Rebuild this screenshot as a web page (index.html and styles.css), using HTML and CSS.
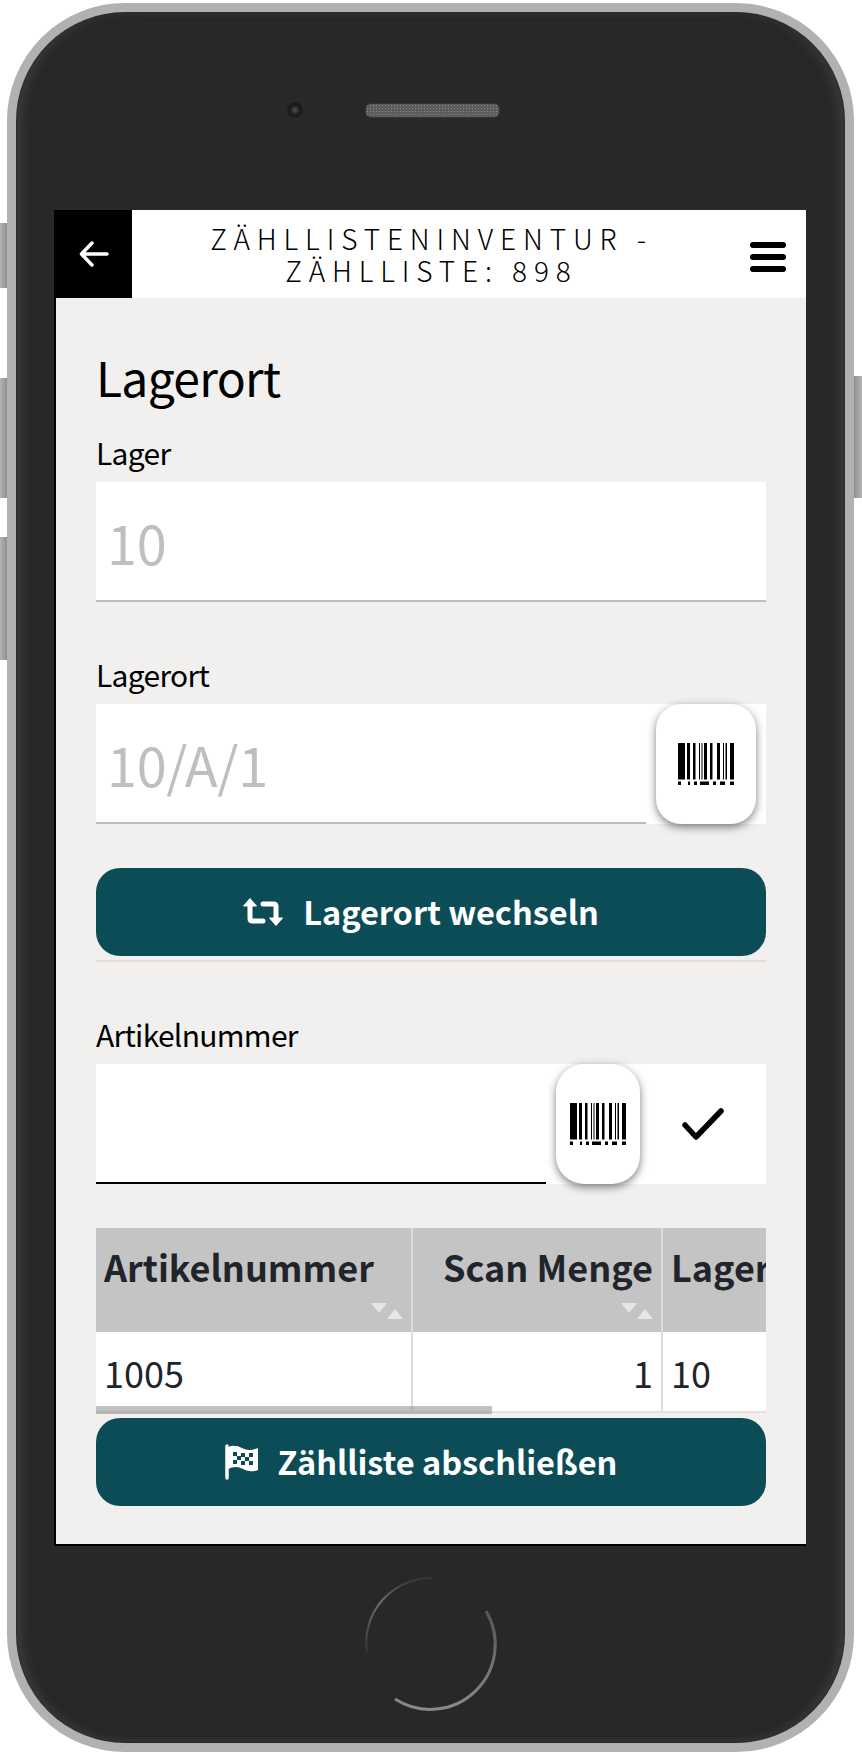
FILE: index.html
```html
<!DOCTYPE html>
<html lang="de">
<head>
    <meta charset="UTF-8">
    <meta name="viewport" content="width=device-width, initial-scale=1.0">
    <title>Zähllisteninventur</title>
    <link rel="stylesheet" href="styles.css">
</head>
<body>

    <div class="phone">
        <!-- Seitentasten -->
        <span class="side-key key-1"></span>
        <span class="side-key key-2"></span>
        <span class="side-key key-3"></span>
        <span class="side-key key-4"></span>

        <div class="bezel-top">
            <span class="camera"></span>
            <span class="speaker"></span>
        </div>

        <div class="screen">
            <div class="topbar">
                <div class="back">
                    <svg width="30" height="26" viewBox="0 0 30 26"><path d="M28 13H3M13 2 2.500 13 13 24" fill="none" stroke="#fff" stroke-width="3.500" stroke-linecap="round" stroke-linejoin="round"/></svg>
                </div>
                <div class="title">ZÄHLLISTENINVENTUR -<br>ZÄHLLISTE: 898</div>
                <div class="burger"><span></span><span></span><span></span></div>
            </div>

            <div class="content">
                <h2>Lagerort</h2>

                <label class="lbl">Lager</label>
                <div class="field"><div class="input muted">10</div></div>

                <label class="lbl lbl-2">Lagerort</label>
                <div class="field">
                    <div class="input muted">10/A/1</div>
                    <button class="scan">
                        <svg width="56" height="42" viewBox="0 0 56 42"><use href="#bars"/></svg>
                    </button>
                </div>

                <button class="action action-1">
                    <svg width="41" height="28" viewBox="0 0 41 28"><path d="M7 8V20.500Q7 23 9.500 23H20M20 6H30.500Q33 6 33 8.500V20" fill="none" stroke="#fff" stroke-width="5" stroke-linecap="round"/><path d="M7 0.500 0.500 8H13.500ZM33 27.500 26.500 20H39.500Z" fill="#fff" stroke="#fff" stroke-width="1" stroke-linejoin="round"/></svg>
                    <span>Lagerort wechseln</span>
                </button>
                <div class="line"></div>

                <label class="lbl lbl-3">Artikelnummer</label>
                <div class="field">
                    <div class="input dark"></div>
                    <button class="scan scan-small">
                        <svg width="56" height="42" viewBox="0 0 56 42"><use href="#bars"/></svg>
                    </button>
                    <div class="check">
                        <svg width="44" height="34" viewBox="0 0 44 34"><path d="M4 18 15 30 40 4" fill="none" stroke="#000" stroke-width="5.500" stroke-linecap="round" stroke-linejoin="round"/></svg>
                    </div>
                </div>

                <div class="table-wrap">
                    <table>
                        <tr>
                            <th class="col-a">Artikelnummer<i class="sort"></i></th>
                            <th class="col-b">Scan Menge<i class="sort"></i></th>
                            <th class="col-c">Lager</th>
                        </tr>
                        <tr>
                            <td class="col-a">1005</td>
                            <td class="col-b">1</td>
                            <td class="col-c">10</td>
                        </tr>
                    </table>
                    <div class="scrollbar"></div>
                </div>

                <button class="action">
                    <svg width="34" height="36" viewBox="0 0 34 36"><path d="M2 2V34" stroke="#fff" stroke-width="3.500" stroke-linecap="round"/><path d="M3 3Q10 0 17 4T33 4V26Q25 29 18 25T3 25Z" fill="#fff"/><path d="M8 8h4v4H8zM16 9h4v4h-4zM24 9h4v4h-4zM12 12h4v4h-4zM20 13h4v4h-4zM8 16h4v4H8zM16 17h4v4h-4zM24 17h4v4h-4z" fill="#0c4c57"/></svg>
                    <span>Zählliste abschließen</span>
                </button>
            </div>
        </div>

        <div class="bezel-bottom">
            <svg width="140" height="140" viewBox="0 0 140 140">
                <defs>
                    <linearGradient id="ring-a" x1="0" y1="0" x2="0" y2="1"><stop offset="0" stop-color="#333"/><stop offset="0.3" stop-color="#6e6e6e"/><stop offset="1" stop-color="#333"/></linearGradient>
                    <linearGradient id="ring-b" x1="0" y1="0" x2="0" y2="1"><stop offset="0" stop-color="#555"/><stop offset="1" stop-color="#8a8a8a"/></linearGradient>
                </defs>
                <path d="M72 5A65 65 0 0 0 6 80" fill="none" stroke="url(#ring-a)" stroke-width="2"/>
                <path d="M125 38A65 65 0 0 1 34 126" fill="none" stroke="url(#ring-b)" stroke-width="3"/>
            </svg>
        </div>
    </div>

    <!-- Barkod, iki yerde kullanılıyor -->
    <svg width="0" height="0" class="defs">
        <g id="bars" fill="#000">
            <path d="M0 0h7v36.500H0zM9 0h3v36.500H9zM15 0h2.500v36.500H15zM21 0h1v36.500h-1zM23.500 0h1v36.500h-1zM26 0h3v36.500h-3zM32 0h2.500v36.500H32zM39 0h3v36.500h-3zM45 0h1v36.500h-1zM47.500 0h1.500v36.500h-1.500zM52 0h4v36.500h-4z"/>
            <path d="M0 38.500h3V42H0zM10 38.500h2V42h-2zM16 38.500h3V42h-3zM22 38.500h9V42h-9zM35 38.500h3V42h-3zM42 38.500h5V42h-5zM52 38.500h4V42h-4z"/>
        </g>
    </svg>

</body>
</html>
```

FILE: styles.css
```css
body {
    margin: 0;
    background-color: #fff;
    font-family: "Noto Sans CJK SC", "Noto Sans", sans-serif;
}

.defs {
    position: absolute;
}

/* Telefon gövdesi */
.phone {
    position: relative;
    box-sizing: border-box;
    width: 847px;
    height: 1749px;
    margin: 3px 0 0 7px;
    border: 9px solid #b1b1b1;
    border-radius: 118px;
    background-color: #282828;
    box-shadow: inset 0 0 3px #1d1d1d, inset 8px 0 10px -2px #3c3c3c, inset -8px 0 10px -2px #3c3c3c, inset 0 -4px 8px -2px #333;
    display: flex;
    flex-direction: column;
}

.side-key {
    position: absolute;
    width: 7px;
    background: linear-gradient(to right, #b5b5b5, #8f8f8f);
}

.key-1 { left: -16px; top: 211px; height: 65px; }
.key-2 { left: -16px; top: 366px; height: 120px; }
.key-3 { left: -16px; top: 525px; height: 123px; }
.key-4 { right: -17px; top: 364px; width: 8px; height: 122px; background: linear-gradient(to right, #8f8f8f, #b5b5b5); }

.bezel-top {
    height: 198px;
    position: relative;
    flex: none;
}

.camera {
    position: absolute;
    left: 271px;
    top: 90px;
    width: 16px;
    height: 16px;
    border-radius: 50%;
    background: radial-gradient(circle, #50505a 0, #1a1a1e 45%, #232325 100%);
}

.speaker {
    position: absolute;
    left: 350px;
    top: 92px;
    width: 133px;
    height: 13px;
    border-radius: 5px;
    background-color: #5c5c5c;
    background-image: radial-gradient(circle, #8a8a8a 1px, transparent 1px);
    background-size: 3px 3px;
    box-shadow: 0 0 2px #555;
}

.screen {
    flex: none;
    height: 1336px;
    margin-left: 38px;
    margin-right: 39px;
    box-sizing: border-box;
    background-color: #f1f0ee;
    border-left: 2px solid #000;
    border-bottom: 2px solid #000;
}

.bezel-bottom {
    flex: 1;
    display: flex;
    justify-content: center;
    padding-top: 27px;
}

.topbar {
    height: 88px;
    background-color: #fff;
    display: flex;
    align-items: center;
}

.back {
    width: 76px;
    height: 88px;
    background-color: #000;
    display: flex;
    align-items: center;
    justify-content: center;
    margin-left: -2px;
    padding-left: 2px;
}

.title {
    flex: 1;
    padding-right: 19px;
    text-align: center;
    font-weight: 300;
    font-size: 28px;
    line-height: 32px;
    letter-spacing: 6.900px;
    color: #000;
}

.burger {
    width: 36px;
    margin: 6px 20px 0 0;
    display: flex;
    flex-direction: column;
    gap: 6px;
}

.burger span {
    height: 6px;
    border-radius: 3px;
    background-color: #000;
}

.content {
    padding: 0 40px;
}

h2 {
    margin: 0;
    padding-top: 46px;
    font-size: 48px;
    line-height: 64px;
    font-weight: 400;
    letter-spacing: -0.700px;
    color: #000;
}

.lbl {
    display: block;
    font-size: 30px;
    line-height: 40px;
    letter-spacing: -0.700px;
    color: #000;
    margin-top: 24px;
    height: 50px;
}

.lbl-2 {
    margin-top: 52px;
}

.lbl-3 {
    margin-top: 52px;
}

.field {
    height: 120px;
    background-color: #fff;
    display: flex;
}

.input {
    flex: 1;
    height: 120px;
    box-sizing: border-box;
    padding-left: 11px;
    font-size: 54px;
    font-weight: 400;
    letter-spacing: -0.300px;
    line-height: 120px;
    border-bottom: 2px solid #bdbdbd;
}

.muted {
    color: #bfbfbf;
}

.dark {
    border-bottom-color: #000;
}

.scan {
    flex: none;
    width: 100px;
    height: 120px;
    margin: 0 10px;
    padding: 0;
    border: none;
    border-radius: 25px;
    background-color: #fff;
    box-shadow: 0 3px 8px rgba(0, 0, 0, 0.5);
    display: flex;
    align-items: center;
    justify-content: center;
}

.scan-small {
    width: 84px;
    border-radius: 28px;
}

.check {
    flex: none;
    width: 106px;
    padding-right: 10px;
    display: flex;
    align-items: center;
    justify-content: center;
}

.action {
    display: flex;
    align-items: center;
    justify-content: center;
    gap: 19px;
    width: 100%;
    height: 88px;
    padding: 0 20px 0 0;
    border: none;
    border-radius: 24px;
    background-color: #0c4c57;
    color: #fff;
    font-family: inherit;
    font-size: 32.500px;
    font-weight: 700;
}

.action span {
    margin-bottom: 4px;
}

.action-1 {
    margin-top: 44px;
}

.line {
    height: 2px;
    margin-top: 4px;
    background-color: #e3ded8;
}

.table-wrap {
    position: relative;
    height: 186px;
    margin-top: 44px;
    margin-bottom: 4px;
    overflow: hidden;
}

table {
    border-collapse: collapse;
    table-layout: fixed;
    width: 800px;
}

th, td {
    padding: 0 8px;
    box-sizing: border-box;
    color: #21252b;
    border-right: 2px solid #dcdcdc;
    white-space: nowrap;
    overflow: hidden;
}

th {
    position: relative;
    height: 104px;
    background-color: #c4c4c4;
    font-size: 36px;
    font-weight: 700;
    padding-bottom: 28px;
}

td {
    height: 80px;
    background-color: #fff;
    font-size: 36px;
    font-weight: 400;
    border-bottom: 2px solid #e2e2e2;
}

.col-a { width: 316px; text-align: left; }
.col-b { width: 250px; text-align: right; }
.col-c { width: 234px; text-align: left; }

.sort {
    position: absolute;
    right: 8px;
    bottom: 13px;
    width: 32px;
    height: 16px;
}

.sort::before,
.sort::after {
    content: "";
    position: absolute;
    width: 0;
    height: 0;
    border-left: 8px solid transparent;
    border-right: 8px solid transparent;
}

.sort::before {
    left: 0;
    top: 0;
    border-top: 10px solid #e6e6e6;
}

.sort::after {
    right: 0;
    bottom: 0;
    border-bottom: 10px solid #e6e6e6;
}

.scrollbar {
    position: absolute;
    left: 0;
    bottom: 0;
    width: 396px;
    height: 8px;
    background-color: rgba(150, 150, 150, 0.6);
}
```
